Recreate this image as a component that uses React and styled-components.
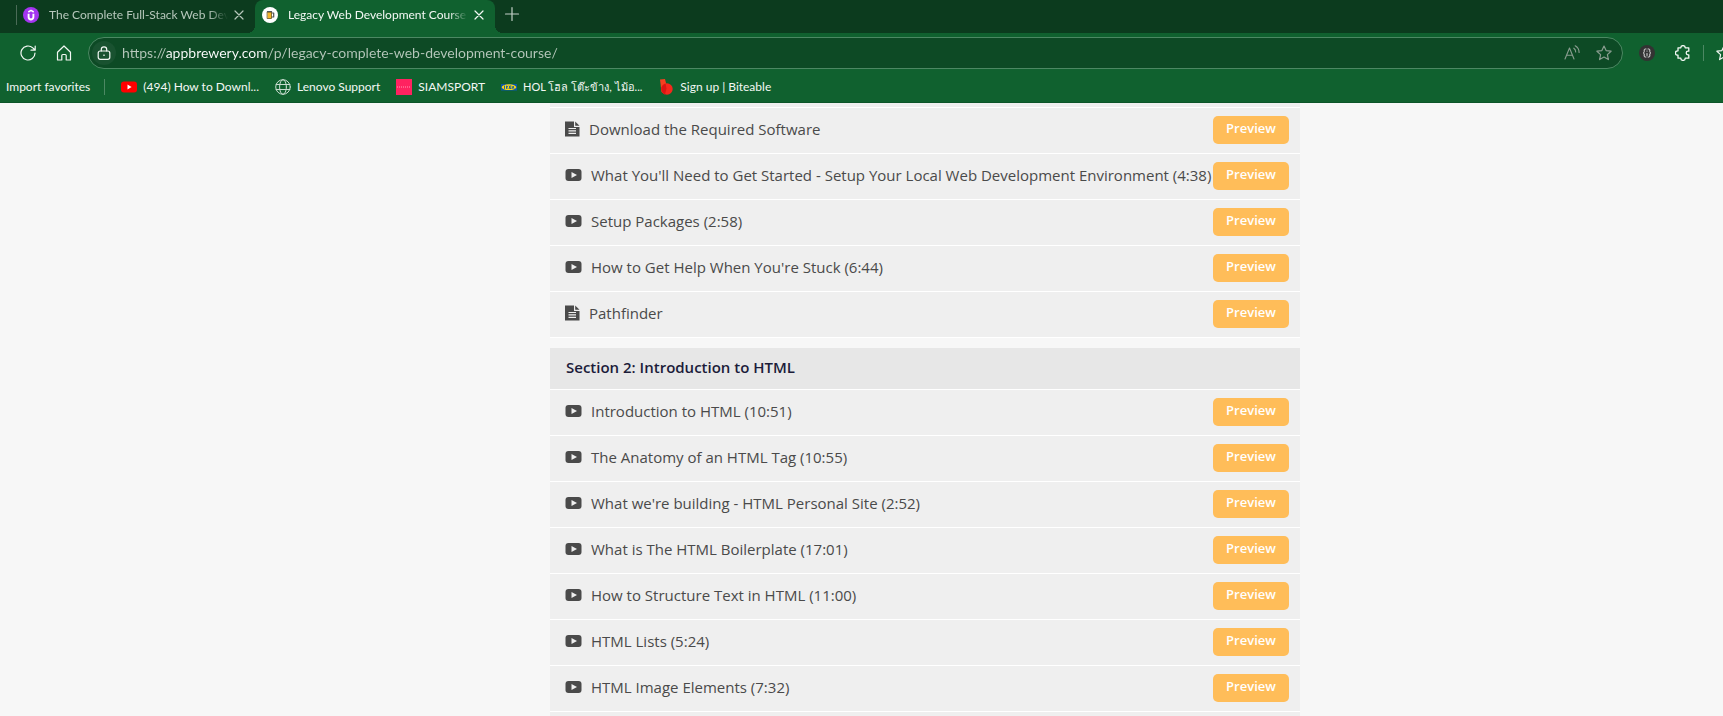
import React from "react";
import styled, { createGlobalStyle, css } from "styled-components";

const GlobalStyle = createGlobalStyle`
  *, *::before, *::after { box-sizing: border-box; }
  body { margin: 0; background: #f7f7f7; font-family: "Open Sans", "Noto Sans", sans-serif; }
  button, input { font: inherit; }
  h2, ul { margin: 0; padding: 0; }
`;

const Window = styled.div`
  height: 100vh;
  display: flex;
  flex-direction: column;
  overflow: hidden;
`;

const Browser = styled.header`
  flex: none;
  background: #10612f;
  border-bottom: 1px solid #0c5529;
  color: #f3f8f4;
  font-family: Lato, "Noto Sans", sans-serif;
  font-size: 12px;
`;

const TabStrip = styled.nav`
  display: flex;
  height: 33px;
  padding-left: 16px;
  background: #0c3b1e;
`;

const Tab = styled.div`
  display: flex;
  align-items: center;
  height: 33px;
  padding: 0 8px 4px 7px;
  width: 240px;
  ${(p) =>
    p.$active
      ? css`
          position: relative;
          background: #10612f;
          border-radius: 8px 8px 0 0;
          &::before,
          &::after {
            content: "";
            position: absolute;
            bottom: 0;
            width: 8px;
            height: 8px;
          }
          &::before {
            left: -8px;
            background: radial-gradient(circle at 0 0, #0c3b1e 8px, #10612f 8px);
          }
          &::after {
            right: -8px;
            background: radial-gradient(circle at 100% 0, #0c3b1e 8px, #10612f 8px);
          }
        `
      : css`
          width: 239px;
          padding-left: 0;
          color: #b6c7bb;
          &::before {
            content: "";
            width: 1px;
            height: 20px;
            margin-right: 6px;
            background: #4b6b57;
          }
        `}
`;

const TabTitle = styled.span`
  flex: 1;
  min-width: 0;
  margin: 0 3px 0 10px;
  overflow: hidden;
  white-space: nowrap;
  line-height: 18px;
  mask-image: linear-gradient(to right, #000 calc(100% - 20px), transparent);
`;

const IconButton = styled.button`
  display: grid;
  place-items: center;
  flex: none;
  padding: 0;
  border: 0;
  background: none;
  color: inherit;
  width: ${(p) => p.$size || 16}px;
  height: ${(p) => p.$size || 16}px;
`;

const NewTab = styled(IconButton)`
  margin: 6px 0 0 9px;
  color: #c3d0c7;
`;

const Toolbar = styled.div`
  display: flex;
  align-items: center;
  height: 40px;
  padding-left: 20px;
  overflow: hidden;
`;

const NavButtons = styled.div`
  display: flex;
  gap: 20px;
  margin-right: 16px;
`;

const AddressBar = styled.form`
  flex: 1;
  display: flex;
  align-items: center;
  height: 32px;
  padding: 0 10px 0 3px;
  border: 1px solid #4c8863;
  border-radius: 16px;
  background: #0d4a25;
  color: #8a9d90;
`;

const SiteInfo = styled(IconButton)`
  border-radius: 50%;
  background: #195230;
  color: #f3f8f4;
  margin-right: 6px;
`;

const Address = styled.input`
  flex: 1;
  min-width: 0;
  padding: 0;
  border: 0;
  outline: 0;
  font-size: 14px;
  line-height: 20px;
  color: transparent;
  background: linear-gradient(to right, #b7c8bc 44px, #fff 44px, #fff 144px, #b7c8bc 144px);
  background-clip: text;
  -webkit-background-clip: text;
`;

const AddressActions = styled.div`
  display: flex;
  gap: 16px;
`;

const Extensions = styled.div`
  display: flex;
  align-items: center;
  width: 100px;
  padding-left: 16px;
  gap: 20px;
  overflow: hidden;
`;

const ToolDivider = styled.i`
  flex: none;
  width: 1px;
  height: 16px;
  margin: 0 -8px;
  background: #4c8863;
`;

const Bookmarks = styled.nav`
  display: flex;
  align-items: center;
  height: 29px;
  padding: 0 0 1px 6px;
  gap: 16px;
`;

const ImportLink = styled.a`
  padding-right: 14px;
  border-right: 1px solid #4c8863;
  line-height: 16px;
  color: inherit;
  text-decoration: none;
`;

const Bookmark = styled.a`
  display: flex;
  align-items: center;
  gap: 6px;
  line-height: 16px;
  white-space: nowrap;
  color: inherit;
  text-decoration: none;
  font-size: ${(p) => (p.$compact ? 11 : 12)}px;
`;

const Page = styled.main`
  flex: 1;
  min-height: 0;
  overflow: hidden;
  padding-left: 127px;
`;

const Course = styled.div`
  max-width: 750px;
  margin: 0 auto;
`;

const Section = styled.section`
  margin-bottom: 10px;
`;

const SectionTitle = styled.h2`
  padding: 9px 16px 12px;
  border-bottom: 1px solid #fff;
  background: #e7e7e7;
  color: #1c1c3a;
  font-size: 15px;
  font-weight: 600;
  line-height: 20px;
`;

const Lectures = styled.ul`
  list-style: none;
`;

const Lecture = styled.li`
  display: flex;
  align-items: center;
  min-height: ${(p) => (p.$edge ? 5 : 46)}px;
  padding: ${(p) => (p.$edge ? "0" : "0 11px 1px 15px")};
  border-bottom: 1px solid #fff;
  background: #efefef;
  color: #4a4a4a;
`;

const LectureLink = styled.a`
  flex: 1;
  display: flex;
  align-items: center;
  gap: 9px;
  padding-bottom: 2px;
  font-size: 15px;
  line-height: 24px;
  white-space: nowrap;
  color: inherit;
  text-decoration: none;
`;

const Preview = styled.button`
  flex: none;
  width: 76px;
  height: 28px;
  padding: 0 0 4px;
  border: 0;
  border-radius: 5px;
  background: #ffbd59;
  color: #fff;
  font-size: 13px;
  font-weight: 600;
  line-height: 24px;
`;

const Svg = ({ size = 16, w, h, children, ...rest }) => (
  <svg width={w || size} height={h || size} viewBox={`0 0 ${w || size} ${h || size}`} fill="none" stroke="currentColor" strokeLinejoin="round" strokeLinecap="round" aria-hidden="true" {...rest}>
    {children}
  </svg>
);

const CloseIcon = () => <Svg size={10} strokeWidth="1.2"><path d="M1 1l8 8M9 1l-8 8" /></Svg>;
const PlusIcon = () => <Svg size={16} strokeWidth="1.2"><path d="M8 1.5v13M1.5 8h13" /></Svg>;
const RefreshIcon = () => <Svg strokeWidth="1.2"><path d="M15 8a7 7 0 1 1-2.2-5.1L15 5M15.2 1v4.2H11" /></Svg>;
const HomeIcon = () => <Svg strokeWidth="1.2"><path d="M1.5 7.2L8 1l6.500 6.200V15h-4.300v-4.500a1 1 0 0 0-1-1H6.800a1 1 0 0 0-1 1V15H1.500z" /></Svg>;
const LockIcon = () => (
  <Svg size={14} strokeWidth="1.2"><rect x="1.200" y="5" width="11.600" height="8.300" rx="2" /><path d="M4.300 5V3.500a2.700 2.700 0 0 1 5.400 0V5" /><circle cx="7" cy="9.200" r=".6" fill="currentColor" stroke="none" /><path d="M7 9.200h.01" /></Svg>
);
const ReadAloudIcon = () => <Svg strokeWidth="1.100"><path d="M1 14L5.500 3l4.500 11M2.700 10.200h5.700M9.800 3.200c1.200.8 1.900 2.200 1.900 3.800M11.200.8c2.300 1.300 3.900 3.700 3.900 6.700" /></Svg>;
const StarIcon = () => <Svg strokeWidth="1.200"><path d="M8 1l2.100 4.600 5 .6-3.700 3.400 1 5L8 12.100l-4.400 2.500 1-5L.9 6.200l5-.6z" /></Svg>;
const PuzzleIcon = () => (
  <Svg strokeWidth="1.300"><path d="M3 2.800h2.800a2.200 2.200 0 0 1 4.400 0h3.600v3.400h-.8a1.800 1.800 0 0 0 0 3.600h.8v3.400h-3.600a2.200 2.200 0 0 1-4.400 0H3V10.200h-.4a2.200 2.200 0 0 1 0-4.400H3z" /></Svg>
);
const BracesBadge = () => (
  <Svg><circle cx="8" cy="8" r="8" fill="#333" stroke="none" /><path d="M7 4H6.200c-.8 0-1 .5-1 1v1.800L4.500 8l.7 1v2c0 .7.300 1 1 1H7M9 4h.8c.8 0 1 .5 1 1v1.800l.7 1.200-.7 1v2c0 .7-.3 1-1 1H9M8 6v.2M8 8.500v2" stroke="#ddd" /></Svg>
);
const UdemyIcon = () => (
  <Svg><circle cx="8" cy="8" r="8" fill="#a435f0" stroke="none" /><path d="M5.300 5L8 3.400 10.700 5" stroke="#fff" strokeWidth="1.500" strokeLinecap="butt" /><path d="M5.600 6.800v3.300c0 3.200 4.800 3.200 4.800 0V6.800" stroke="#fff" strokeWidth="1.900" strokeLinecap="butt" /></Svg>
);
const BeerIcon = () => (
  <Svg><circle cx="8" cy="8" r="8" fill="#fff" stroke="none" /><path d="M9.500 6h2.200v4H9.500" stroke="#555" strokeWidth="1.200" /><path d="M5.500 5h4v6.500h-4z" fill="#f4b52a" stroke="#6d5520" strokeWidth=".8" /><path d="M5.500 4.600h4" stroke="#555" strokeWidth="1.400" /></Svg>
);
const YoutubeIcon = () => <Svg><rect y="2.500" width="16" height="11" rx="3" fill="#f00" stroke="none" /><path d="M6.500 5.600v4.800L10.600 8z" fill="#fff" stroke="none" /></Svg>;
const GlobeIcon = () => <Svg stroke="#c8dccf"><circle cx="8" cy="8" r="7.300" /><ellipse cx="8" cy="8" rx="3.400" ry="7.300" /><path d="M1.200 5.500h13.600M1.200 10.500h13.600" /></Svg>;
const SiamIcon = () => <Svg><path d="M0 0h16v16H0z" fill="#ff2260" stroke="none" /><path d="M1 8h14" stroke="#ff9db8" strokeDasharray="1 1" strokeLinecap="butt" /></Svg>;
const IkeaIcon = () => (
  <Svg><path d="M0 5h16v6.500H0z" fill="#0a58a8" stroke="none" /><ellipse cx="8" cy="8.200" rx="7.300" ry="2.900" fill="#fbd914" stroke="none" /><path d="M3.500 7v2.500M5.500 7v2.500M7 7L5.700 8.200 7 9.500M10 7H8.600v2.500H10M8.600 8.200H10M11.300 9.500l.8-2.500.8 2.500" stroke="#0a58a8" strokeWidth=".9" /></Svg>
);
const BiteableIcon = () => (
  <Svg><path d="M2 .5L7 0l1.500 6L7 15.500 3.500 13z" fill="#f5401f" stroke="none" /><circle cx="9" cy="10" r="5.700" fill="#f5281c" stroke="none" /><path d="M3.400 8.500A5.700 5.700 0 0 1 7.500 4.500l1 5-1.500 6A5.700 5.700 0 0 1 3.400 11z" fill="#dc1413" stroke="none" /></Svg>
);
const FileIcon = () => (
  <Svg w={15} h={16} stroke="none"><path d="M0 .5h9V6h5.500v9.500H0z" fill="currentColor" /><path d="M10.200.5L14.500 4.800h-4.300z" fill="currentColor" /><path d="M3.500 7.500h7.500M3.500 9.900h7.500M3.500 12.300h7.500" stroke="#efefef" strokeWidth="1.200" strokeLinecap="butt" /></Svg>
);
const VideoIcon = () => (
  <Svg w={17} h={14} stroke="none"><rect x=".5" y="1" width="16" height="12" rx="3" fill="currentColor" /><path d="M6.500 4v6L12 7z" fill="#efefef" /></Svg>
);

const bookmarks = [
  { label: "(494) How to Downl...", Icon: YoutubeIcon },
  { label: "Lenovo Support", Icon: GlobeIcon },
  { label: "SIAMSPORT", Icon: SiamIcon },
  { label: "HOL โฮล โต๊ะข้าง, ไม้อ...", Icon: IkeaIcon, compact: true },
  { label: "Sign up | Biteable", Icon: BiteableIcon },
];

const gettingStarted = [
  { title: "Download the Required Software", file: true },
  { title: "What You'll Need to Get Started - Setup Your Local Web Development Environment (4:38)" },
  { title: "Setup Packages (2:58)" },
  { title: "How to Get Help When You're Stuck (6:44)" },
  { title: "Pathfinder", file: true },
];

const introToHtml = [
  { title: "Introduction to HTML (10:51)" },
  { title: "The Anatomy of an HTML Tag (10:55)" },
  { title: "What we're building - HTML Personal Site (2:52)" },
  { title: "What is The HTML Boilerplate (17:01)" },
  { title: "How to Structure Text in HTML (11:00)" },
  { title: "HTML Lists (5:24)" },
  { title: "HTML Image Elements (7:32)" },
];

const LectureRow = ({ title, file }) => (
  <Lecture>
    <LectureLink href="#">
      {file ? <FileIcon /> : <VideoIcon />}
      {title}
    </LectureLink>
    <Preview type="button">Preview</Preview>
  </Lecture>
);

export default function App() {
  return (
    <Window>
      <GlobalStyle />
      <Browser>
        <TabStrip aria-label="Tabs">
          <Tab>
            <UdemyIcon />
            <TabTitle>The Complete Full-Stack Web Dev</TabTitle>
            <IconButton aria-label="Close tab"><CloseIcon /></IconButton>
          </Tab>
          <Tab $active>
            <BeerIcon />
            <TabTitle>Legacy Web Development Course</TabTitle>
            <IconButton aria-label="Close tab"><CloseIcon /></IconButton>
          </Tab>
          <NewTab aria-label="New tab"><PlusIcon /></NewTab>
        </TabStrip>
        <Toolbar>
          <NavButtons>
            <IconButton aria-label="Refresh"><RefreshIcon /></IconButton>
            <IconButton aria-label="Home"><HomeIcon /></IconButton>
          </NavButtons>
          <AddressBar>
            <SiteInfo type="button" $size={24} aria-label="View site information"><LockIcon /></SiteInfo>
            <Address aria-label="Address" defaultValue="https://appbrewery.com/p/legacy-complete-web-development-course/" />
            <AddressActions>
              <IconButton type="button" aria-label="Read aloud"><ReadAloudIcon /></IconButton>
              <IconButton type="button" aria-label="Add to favorites"><StarIcon /></IconButton>
            </AddressActions>
          </AddressBar>
          <Extensions>
            <IconButton aria-label="Extension"><BracesBadge /></IconButton>
            <IconButton aria-label="Extensions"><PuzzleIcon /></IconButton>
            <ToolDivider />
            <IconButton aria-label="Favorites"><StarIcon /></IconButton>
          </Extensions>
        </Toolbar>
        <Bookmarks aria-label="Favorites bar">
          <ImportLink href="#">Import favorites</ImportLink>
          {bookmarks.map(({ label, Icon, compact }) => (
            <Bookmark key={label} href="#" $compact={compact}>
              <Icon />
              {label}
            </Bookmark>
          ))}
        </Bookmarks>
      </Browser>
      <Page>
        <Course>
          <Section>
            <Lectures>
              <Lecture $edge />
              {gettingStarted.map((l) => <LectureRow key={l.title} {...l} />)}
            </Lectures>
          </Section>
          <Section>
            <SectionTitle>Section 2: Introduction to HTML</SectionTitle>
            <Lectures>
              {introToHtml.map((l) => <LectureRow key={l.title} {...l} />)}
              <Lecture $edge />
            </Lectures>
          </Section>
        </Course>
      </Page>
    </Window>
  );
}
